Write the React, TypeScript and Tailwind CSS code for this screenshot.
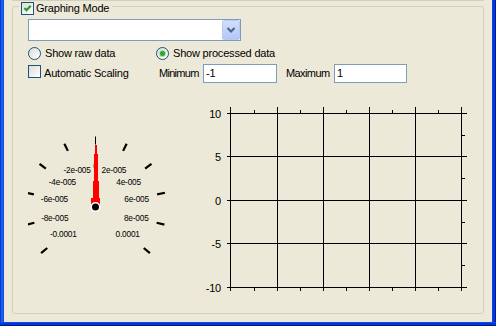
import React from "react";

const GAUGE = [
  { a: -130, label: "-0.0001" },
  { a: -104, label: "-8e-005" },
  { a: -78, label: "-6e-005" },
  { a: -52, label: "-4e-005" },
  { a: -26, label: "-2e-005" },
  { a: 0, label: "0" },
  { a: 26, label: "2e-005" },
  { a: 52, label: "4e-005" },
  { a: 78, label: "6e-005" },
  { a: 104, label: "8e-005" },
  { a: 130, label: "0.0001" },
];

const polar = (cx: number, cy: number, r: number, deg: number) => {
  const t = (deg * Math.PI) / 180;
  return [cx + r * Math.sin(t), cy - r * Math.cos(t)];
};

function CheckBox({ checked }: { checked?: boolean }) {
  return (
    <span className="flex h-[13px] w-[13px] shrink-0 items-center justify-center border border-[#1c5180] bg-gradient-to-br from-[#dcdcd7] to-white">
      {checked && (
        <svg width="11" height="11" viewBox="0 0 11 11">
          <path d="M2.5 5 L4.5 7.2 L8.7 2.8" fill="none" stroke="#21a121" strokeWidth="2.2" />
        </svg>
      )}
    </span>
  );
}

function Radio({ checked }: { checked?: boolean }) {
  return (
    <span className="flex h-[13px] w-[13px] shrink-0 items-center justify-center rounded-full border border-[#1c5180] bg-gradient-to-br from-[#dcdcd7] to-white">
      {checked && <span className="h-[5px] w-[5px] rounded-full bg-[#2aa82a] shadow-[0_0_0_1px_#a8dca8]" />}
    </span>
  );
}

function Gauge() {
  const cx = 67.5;
  const cy = 107.5;
  return (
    <svg width="152" height="170" className="shrink-0">
      {GAUGE.map((t) => {
        const [x1, y1] = polar(cx, cy, 63, t.a);
        const [x2, y2] = polar(cx, cy, 71, t.a);
        const [lx, ly] = polar(cx, cy, 42, t.a);
        return (
          <g key={t.a}>
            <line x1={x1} y1={y1} x2={x2} y2={y2} stroke="#000" strokeWidth={t.a === 0 ? 1 : 2.2} />
            <text x={lx} y={ly + 3} fontSize="8.3" textAnchor="middle" fill="#000">
              {t.label}
            </text>
          </g>
        );
      })}
      {/* needle */}
      <g fill="#ff0000" shapeRendering="crispEdges">
        <rect x="67" y="45" width="2" height="9" />
        <rect x="66" y="54" width="4" height="27" />
        <rect x="65" y="81" width="6" height="17" />
        <rect x="63" y="98" width="9" height="7" />
      </g>
      <circle cx="67.5" cy="107" r="5" fill="#fff" />
      <circle cx="67.5" cy="107" r="3.5" fill="#000" />
    </svg>
  );
}

function Graph() {
  const xs = [30, 77, 123, 169, 215, 261];
  const ys = [13, 56, 100, 143, 187];
  const labels = ["10", "5", "0", "-5", "-10"];
  return (
    <svg width="275" height="200" className="shrink-0">
      <g stroke="#000" strokeWidth="1" shapeRendering="crispEdges">
        {xs.map((x) => (
          <line key={"v" + x} x1={x + 0.5} y1="7" x2={x + 0.5} y2="191" />
        ))}
        {ys.map((y) => (
          <line key={"h" + y} x1="27" y1={y + 0.5} x2="267" y2={y + 0.5} />
        ))}
        {xs.slice(0, -1).map((x, i) => {
          const m = Math.round((x + xs[i + 1]) / 2) + 0.5;
          return (
            <g key={"m" + x}>
              <line x1={m} y1="10" x2={m} y2="13" />
              <line x1={m} y1="188" x2={m} y2="191" />
            </g>
          );
        })}
        {ys.slice(0, -1).map((y, i) => {
          const m = Math.round((y + ys[i + 1]) / 2) + 0.5;
          return <line key={"r" + y} x1="262" y1={m} x2="265" y2={m} />;
        })}
      </g>
      {ys.map((y, i) => (
        <text key={"l" + y} x="21" y={y + 5} fontSize="11" textAnchor="end" fill="#000">
          {labels[i]}
        </text>
      ))}
    </svg>
  );
}

export default function App() {
  return (
    <div className="flex h-[326px] w-[496px] flex-col bg-[#ece9d8] font-['Liberation_Sans',Arial,sans-serif] text-[11px] leading-[13px] tracking-[-0.2px] text-black">
      <div className="flex h-[322px]">
        {/* left frame */}
        <div className="flex w-[4px]">
          <div className="w-[1px] bg-[#0a3bd1]" />
          <div className="w-[2px] bg-[#1762ee]" />
          <div className="w-[1px] bg-[#0d4de6]" />
        </div>

        {/* client */}
        <div className="flex w-[488px] flex-col">
          <div className="ml-[8px] h-[1px] w-[472px] bg-[#d0d0bf]" />

          <div className="relative ml-[8px] mt-[5px] flex h-[308px] w-[472px] flex-col rounded-[3px] border border-[#d0d0bf] pl-[15px] pt-[12px]">
            {/* legend */}
            <div className="absolute -top-[5px] left-[6px] flex items-center bg-[#ece9d8] pl-[2px] pr-[3px]">
              <CheckBox checked />
              <span className="ml-[2px]">Graphing Mode</span>
            </div>

            {/* combo */}
            <div className="flex h-[22px] w-[213px] items-stretch border border-[#7f9db9] bg-white">
              <div className="flex-1" />
              <div className="flex w-[18px] items-center justify-center rounded-[2px] border border-[#b9cbf3] bg-gradient-to-b from-[#d2defd] to-[#b3c7f7]">
                <svg width="10" height="8" viewBox="0 0 10 8">
                  <polyline points="1.5,2 5,5.5 8.5,2" fill="none" stroke="#4d6185" strokeWidth="2" />
                </svg>
              </div>
            </div>

            {/* radios */}
            <div className="mt-[6px] flex h-[13px] items-center">
              <div className="flex w-[128px] items-center">
                <Radio />
                <span className="ml-[4px]">Show raw data</span>
              </div>
              <div className="flex items-center">
                <Radio checked />
                <span className="ml-[4px]">Show processed data</span>
              </div>
            </div>

            {/* scaling */}
            <div className="mt-[4px] flex items-start">
              <div className="flex w-[131px] items-start pt-[1px]">
                <CheckBox />
                <span className="ml-[3px] mt-[2px]">Automatic Scaling</span>
              </div>
              <span className="mt-[3px] w-[44px] tracking-[-0.7px]">Minimum</span>
              <div className="flex h-[19px] w-[74px] items-center border border-[#7f9db9] bg-white pl-[2px]">-1</div>
              <span className="ml-[9px] mt-[3px] w-[48px] tracking-[-0.6px]">Maximum</span>
              <div className="flex h-[19px] w-[73px] items-center border border-[#7f9db9] bg-white pl-[2px]">1</div>
            </div>

            {/* displays */}
            <div className="mt-[17px] flex items-start">
              <Gauge />
              <div className="ml-[20px]">
                <Graph />
              </div>
            </div>
          </div>
        </div>

        {/* right frame */}
        <div className="flex w-[4px]">
          <div className="w-[1px] bg-[#0b45e3]" />
          <div className="w-[2px] bg-[#0336d5]" />
          <div className="w-[1px] bg-[#001aa6]" />
        </div>
      </div>

      {/* bottom frame */}
      <div className="flex h-[4px] flex-col">
        <div className="h-[1px] bg-[#0b4be5]" />
        <div className="h-[2px] bg-[#0336d5]" />
        <div className="h-[1px] bg-[#00148c]" />
      </div>
    </div>
  );
}
